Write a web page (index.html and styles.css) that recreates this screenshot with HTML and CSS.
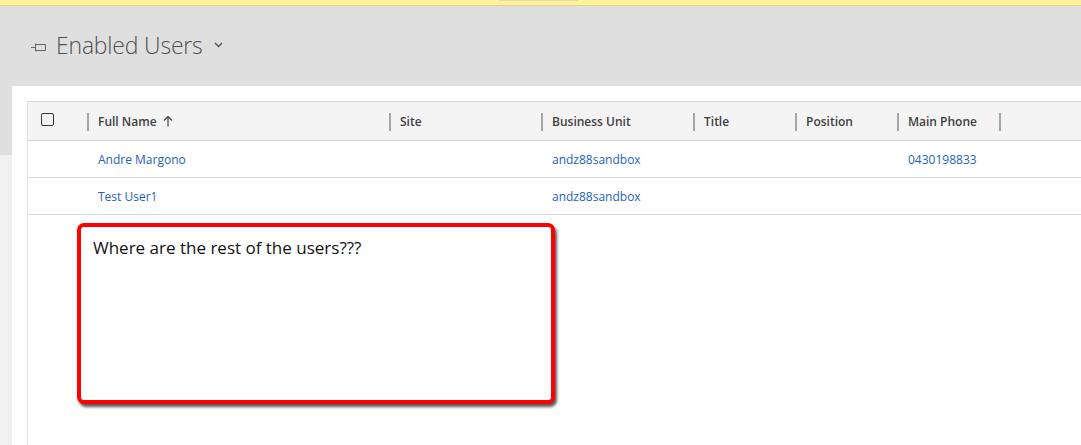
FILE: index.html
```html
<!DOCTYPE html>
<html lang="en">
<head>
  <meta charset="UTF-8" />
  <title>Enabled Users</title>
  <link rel="stylesheet" href="styles.css">
</head>
<body>

  <!-- Notification strip -->
  <div class="notice-bar"><span class="notice-tab"></span></div>

  <!-- View header -->
  <div class="view-header">
    <svg class="pin" width="16" height="10" viewBox="0 0 16 10">
      <path d="M0 5.5H4.5M4.5 1.5V9.5M4.5 2.5H14.5V8.5H4.5M14.5 2.5V8.5" fill="none" stroke="#666" stroke-width="1"/>
    </svg>
    <h1>Enabled Users</h1>
    <svg class="chevron" width="9" height="6" viewBox="0 0 9 6">
      <path d="M1 1L4.5 4.5L8 1" fill="none" stroke="#555" stroke-width="1.5"/>
    </svg>
  </div>

  <div class="main">
    <div class="side-strip"></div>

    <div class="panel">
      <div class="grid">
        <div class="row head">
          <div class="cell check"><span class="checkbox"></span></div>
          <div class="cell c-name">Full Name
            <svg class="sort" width="10" height="12" viewBox="0 0 10 12">
              <path d="M5 1.5V11.5M1 5.5L5 1.5L9 5.5" fill="none" stroke="#444" stroke-width="1.2"/>
            </svg>
          </div>
          <div class="cell c-site">Site</div>
          <div class="cell c-bu">Business Unit</div>
          <div class="cell c-title">Title</div>
          <div class="cell c-pos">Position</div>
          <div class="cell c-phone">Main Phone</div>
          <div class="cell c-end"></div>
        </div>

        <div class="row">
          <div class="cell check"></div>
          <div class="cell c-name"><a href="#">Andre Margono</a></div>
          <div class="cell c-site"></div>
          <div class="cell c-bu"><a href="#">andz88sandbox</a></div>
          <div class="cell c-title"></div>
          <div class="cell c-pos"></div>
          <div class="cell c-phone"><a href="#">0430198833</a></div>
        </div>

        <div class="row">
          <div class="cell check"></div>
          <div class="cell c-name"><a href="#">Test User1</a></div>
          <div class="cell c-site"></div>
          <div class="cell c-bu"><a href="#">andz88sandbox</a></div>
          <div class="cell c-title"></div>
          <div class="cell c-pos"></div>
          <div class="cell c-phone"></div>
        </div>

        <!-- Annotation callout -->
        <div class="callout">Where are the rest of the users???</div>
      </div>
    </div>
  </div>

</body>
</html>
```

FILE: styles.css
```css
body {
  margin: 0;
  font-family: "Open Sans", "Noto Sans", sans-serif;
  background: #ffffff;
  height: 445px;
  overflow: hidden;
  display: flex;
  flex-direction: column;
}

.notice-bar {
  height: 5px;
  background: #fff199;
  border-bottom: 1px solid #e2d68c;
  position: relative;
}

.notice-tab {
  position: absolute;
  left: 499px;
  top: 0;
  width: 79px;
  height: 1px;
  background: #d6e49c;
}

.view-header {
  height: 80px;
  background: #dfdfdf;
  display: flex;
  align-items: center;
  padding-left: 31px;
  box-sizing: border-box;
}

.view-header .pin {
  margin-top: 2px;
}

.view-header h1 {
  margin: 0 0 3px 9px;
  font-weight: 300;
  font-size: 23px;
  color: #505050;
  letter-spacing: -0.2px;
}

.view-header .chevron {
  margin-left: 11px;
  margin-top: -3px;
}

.main {
  flex: 1;
  display: flex;
}

.side-strip {
  width: 12px;
  background: linear-gradient(#dfdfdf 0, #dfdfdf 69px, #f0f0f0 69px);
}

.panel {
  flex: 1;
  background: #ffffff;
  padding: 15px 0 0 15px;
  display: flex;
}

.grid {
  flex: 1;
  border-left: 1px solid #e2e2e2;
  border-top: 1px solid #d8d8d8;
}

.row {
  display: flex;
  height: 36px;
  border-bottom: 1px solid #dcdcdc;
  align-items: center;
}

.row.head {
  height: 38px;
  background: #f4f4f4;
  border-bottom: 1px solid #d3d3d3;
}

.cell {
  box-sizing: border-box;
  padding-left: 11px;
  font-size: 12px;
  height: 100%;
  display: flex;
  align-items: center;
  position: relative;
  flex-shrink: 0;
}

.row.head .cell {
  font-weight: 600;
  color: #404040;
}

.row.head .cell + .cell::before {
  content: "";
  position: absolute;
  left: 0;
  top: 11px;
  height: 18px;
  width: 2px;
  background: #a6a6a6;
}

.row a {
  color: #1e62be;
  text-decoration: none;
}

.check { width: 59px; padding-left: 13px; }
.c-name { width: 302px; }
.c-site { width: 152px; }
.c-bu { width: 152px; }
.c-title { width: 102px; }
.c-pos { width: 102px; }
.c-phone { width: 102px; }
.c-end { width: 20px; }

.checkbox {
  display: block;
  width: 11px;
  height: 11px;
  border: 1px solid #333;
  border-radius: 2px;
  margin-top: -4px;
}

.sort {
  margin-left: 6px;
}

.callout {
  margin: 8px 0 0 49px;
  width: 478px;
  height: 181px;
  border: 4px solid #ff0000;
  border-radius: 7px;
  box-shadow: 2px 3px 3px rgba(0, 0, 0, 0.65);
  padding: 9px 12px;
  box-sizing: border-box;
  font-size: 17px;
  color: #111;
  background: #fff;
}
```
